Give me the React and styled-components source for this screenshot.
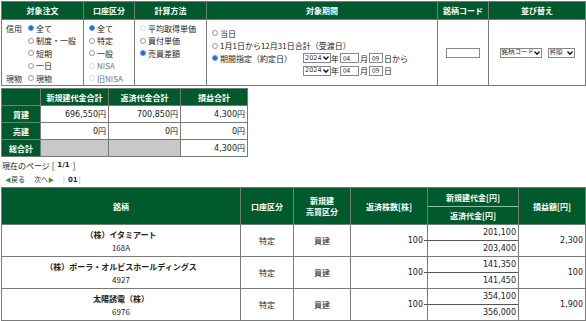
import React from 'react';
import styled, { createGlobalStyle } from 'styled-components';

const GREEN = '#005a2c';
const LINE = '#7a7a7a';

const GlobalStyle = createGlobalStyle`
  body {
    margin: 0;
    padding: 1px;
    background: #fff;
    color: #222;
    font-family: "DejaVu Sans", "Noto Sans CJK JP", sans-serif;
    font-size: 8px;
    line-height: 11px;
  }
`;

const Table = styled.table`
  border-collapse: collapse;
  table-layout: fixed;
  width: ${p => p.$w}px;
  border: 1px solid #555;
  td, th {
    border: 1px solid ${LINE};
    padding: 0;
    box-sizing: border-box;
  }
`;

const Th = styled.th`
  background: ${GREEN};
  color: #fff;
  font-weight: bold;
  font-family: "Noto Sans CJK JP", sans-serif;
  font-size: 8px;
  height: ${p => p.$h || 17}px;
  text-align: center;
  line-height: 11px;
`;

const Cell = styled.td`
  vertical-align: ${p => p.$valign || 'top'};
  text-align: ${p => p.$align || 'left'};
  padding: ${p => p.$pad || '0'} !important;
  background: ${p => (p.$gray ? '#c8c8c8' : '#fff')};
  height: ${p => p.$h || 17}px;
`;

const Label = styled.td`
  background: ${GREEN};
  color: #fff;
  font-weight: bold;
  font-family: "Noto Sans CJK JP", sans-serif;
  text-align: center;
`;

const Line = styled.div`
  display: flex;
  align-items: center;
  height: 12.5px;
  white-space: nowrap;
  color: #222;
  font-family: "Noto Sans CJK JP", sans-serif;
`;

const Side = styled.span`
  display: inline-flex;
  align-items: center;
  width: ${p => p.$w}px;
`;

const Dot = styled.span`
  display: inline-block;
  flex: none;
  width: 6px;
  height: 6px;
  border-radius: 50%;
  margin-right: 2px;
  box-sizing: border-box;
  border: 1px solid ${p => (p.$off ? '#ddd' : '#9a9a9a')};
  background: ${p =>
    p.$on ? 'radial-gradient(circle, #1a6fe0 55%, #7fb0f0 100%)' : '#fff'};
  ${p => p.$on && 'border-color: #5d95e6;'}
`;

const Muted = styled.span`
  color: #777;
`;

const Radio = ({ on, off, muted, children }) => (
  <>
    <Dot $on={on} $off={off} />
    {muted ? <Muted>{children}</Muted> : <span>{children}</span>}
  </>
);

const Period = styled.div`
  padding-left: 5px;
  padding-top: 7px;
`;

const DateRow = styled.div`
  display: flex;
  align-items: center;
  height: 12.5px;
  white-space: nowrap;
  font-family: "Noto Sans CJK JP", sans-serif;
`;

const Sel = styled.span`
  display: inline-flex;
  align-items: center;
  justify-content: space-between;
  box-sizing: border-box;
  height: 10px;
  width: ${p => p.$w}px;
  border: 1px solid #888;
  background: #fff;
  padding: 0 1px;
  font-size: 6.5px;
  color: #333;
  white-space: nowrap;
  overflow: hidden;
  font-family: "DejaVu Sans", "Noto Sans CJK JP", sans-serif;
`;

const Box = styled.span`
  display: inline-flex;
  align-items: center;
  box-sizing: border-box;
  height: 10px;
  width: ${p => p.$w}px;
  border: 1px solid #888;
  background: #fff;
  padding-left: 2px;
  font-size: 6.5px;
  margin: 0 1px;
`;

const Caret = () => (
  <svg width="6" height="4" viewBox="0 0 6 4" style={{ flex: 'none' }}>
    <path d="M0.5 0.5 L3 3.3 L5.5 0.5" stroke="#111" strokeWidth="1.3" fill="none" />
  </svg>
);

const Select = ({ w, children }) => (
  <Sel $w={w}>
    <span>{children}</span>
    <Caret />
  </Sel>
);

const Centered = styled.div`
  display: flex;
  align-items: center;
  justify-content: center;
  gap: 6px;
`;

const Gap = styled.div`
  height: 2px;
`;

const Money = styled(Cell)`
  padding-right: ${p => p.$pr || 2}px !important;
  font-family: "DejaVu Sans", "Noto Sans CJK JP", sans-serif;
`;

const PageInfo = styled.div`
  margin-top: 2px;
  height: 13px;
  display: flex;
  align-items: center;
  padding-left: 1px;
  font-family: "Noto Sans CJK JP", sans-serif;
  b { font-family: "DejaVu Sans", sans-serif; font-size: 7px; margin: 0 3px; }
`;

const Pager = styled.div`
  height: 15px;
  display: flex;
  align-items: center;
  padding-left: 4px;
  font-size: 7px;
  font-family: "Noto Sans CJK JP", sans-serif;
  color: #333;
  gap: 9px;
`;

const Arrow = styled.span`
  color: #2e9a2e;
  font-size: 6px;
`;

const PageNo = styled.span`
  color: #c08a20;
  b { color: #1b2a6b; font-family: "DejaVu Sans", sans-serif; margin: 0 1px 0 3px; }
`;

const Stock = styled.div`
  font-family: "Noto Sans CJK JP", sans-serif;
  text-align: center;
  line-height: 13px;
  strong { font-weight: bold; display: block; }
`;

const Split = styled.div`
  height: ${p => p.$h}px;
  box-sizing: border-box;
  display: flex;
  align-items: center;
  justify-content: ${p => (p.$head ? 'center' : 'flex-end')};
  padding-right: ${p => (p.$head ? 0 : 2)}px;
  position: relative;
  ${p => p.$second && `border-top: 1px solid ${p.$head ? '#9fb8a8' : '#555'};`}
  ${p =>
    p.$second && !p.$head &&
    `&::before { content: ''; position: absolute; left: -4px; top: -1px; width: 4px; border-top: 1px solid #555; }`}
`;

const rows = [
  { name: '（株）イタミアート', code: '168A', buy: '201,100', sell: '203,400', pl: '2,300' },
  { name: '（株）ポーラ・オルビスホールディングス', code: '4927', buy: '141,350', sell: '141,450', pl: '100' },
  { name: '太陽誘電（株）', code: '6976', buy: '354,100', sell: '356,000', pl: '1,900' },
];

export default function App() {
  return (
    <>
      <GlobalStyle />
      <Table $w={584}>
        <colgroup>
          <col style={{ width: 82 }} />
          <col style={{ width: 51 }} />
          <col style={{ width: 72 }} />
          <col style={{ width: 231 }} />
          <col style={{ width: 51 }} />
          <col style={{ width: 97 }} />
        </colgroup>
        <thead>
          <tr>
            <Th $h={18}>対象注文</Th>
            <Th>口座区分</Th>
            <Th>計算方法</Th>
            <Th>対象期間</Th>
            <Th>銘柄コード</Th>
            <Th>並び替え</Th>
          </tr>
        </thead>
        <tbody>
          <tr>
            <Cell $h={66} $pad="2px 0 0 4px">
              <Line><Side $w={22}>信用</Side><Radio on>全て</Radio></Line>
              <Line><Side $w={22} /><Radio>制度・一般</Radio></Line>
              <Line><Side $w={22} /><Radio>短期</Radio></Line>
              <Line><Side $w={22} /><Radio>一日</Radio></Line>
              <Line><Side $w={22}>現物</Side><Radio>現物</Radio></Line>
            </Cell>
            <Cell $pad="2px 0 0 5px">
              <Line><Radio on>全て</Radio></Line>
              <Line><Radio>特定</Radio></Line>
              <Line><Radio>一般</Radio></Line>
              <Line><Radio off muted>NISA</Radio></Line>
              <Line><Radio off muted>旧NISA</Radio></Line>
            </Cell>
            <Cell $pad="2px 0 0 5px">
              <Line><Radio off>平均取得単価</Radio></Line>
              <Line><Radio>買付単価</Radio></Line>
              <Line><Radio on>売買差額</Radio></Line>
            </Cell>
            <Cell>
              <Period>
                <Line><Radio>当日</Radio></Line>
                <Line><Radio>1月1日から12月31日合計（受渡日）</Radio></Line>
                <DateRow>
                  <Side $w={91}><Radio on>期間指定（約定日）</Radio></Side>
                  <Select w={28}>2024</Select>年<Box $w={19}>04</Box>月<Box $w={14}>09</Box>日から
                </DateRow>
                <DateRow>
                  <Side $w={91} />
                  <Select w={28}>2024</Select>年<Box $w={19}>04</Box>月<Box $w={14}>09</Box>日
                </DateRow>
              </Period>
            </Cell>
            <Cell $valign="middle" $align="center">
              <Centered><Box $w={34} /></Centered>
            </Cell>
            <Cell $valign="middle">
              <Centered>
                <Select w={42}>銘柄コード</Select>
                <Select w={27}>昇順</Select>
              </Centered>
            </Cell>
          </tr>
        </tbody>
      </Table>

      <Gap />

      <Table $w={246}>
        <colgroup>
          <col style={{ width: 39 }} />
          <col style={{ width: 68 }} />
          <col style={{ width: 72 }} />
          <col style={{ width: 67 }} />
        </colgroup>
        <thead>
          <tr>
            <Th $h={17} />
            <Th>新規建代金合計</Th>
            <Th>返済代金合計</Th>
            <Th>損益合計</Th>
          </tr>
        </thead>
        <tbody>
          <tr>
            <Label>買建</Label>
            <Money $align="right" $valign="middle">696,550円</Money>
            <Money $align="right" $valign="middle">700,850円</Money>
            <Money $align="right" $valign="middle">4,300円</Money>
          </tr>
          <tr>
            <Label>売建</Label>
            <Money $align="right" $valign="middle">0円</Money>
            <Money $align="right" $valign="middle">0円</Money>
            <Money $align="right" $valign="middle">0円</Money>
          </tr>
          <tr>
            <Label>総合計</Label>
            <Cell $gray />
            <Cell $gray />
            <Money $align="right" $valign="middle">4,300円</Money>
          </tr>
        </tbody>
      </Table>

      <PageInfo>現在のページ [<b>1/1</b>]</PageInfo>
      <Pager>
        <span><Arrow>◀</Arrow>戻る</span>
        <span>次へ<Arrow>▶</Arrow></span>
        <PageNo>|<b>01</b>|</PageNo>
      </Pager>

      <Table $w={584}>
        <colgroup>
          <col style={{ width: 239 }} />
          <col style={{ width: 53 }} />
          <col style={{ width: 57 }} />
          <col style={{ width: 77 }} />
          <col style={{ width: 91 }} />
          <col style={{ width: 67 }} />
        </colgroup>
        <thead>
          <tr>
            <Th $h={37}>銘柄</Th>
            <Th>口座区分</Th>
            <Th>新規建<br />売買区分</Th>
            <Th>返済株数[株]</Th>
            <Th>
              <Split $h={18} $head>新規建代金[円]</Split>
              <Split $h={18} $head $second>返済代金[円]</Split>
            </Th>
            <Th>損益額[円]</Th>
          </tr>
        </thead>
        <tbody>
          {rows.map(r => (
            <tr key={r.code}>
              <Cell $valign="middle" $h={32}>
                <Stock>
                  <strong>{r.name}</strong>
                  {r.code}
                </Stock>
              </Cell>
              <Cell $valign="middle" $align="center">
                <Stock>特定</Stock>
              </Cell>
              <Cell $valign="middle" $align="center">
                <Stock>買建</Stock>
              </Cell>
              <Money $valign="middle" $align="right" $pr={4}>100</Money>
              <Cell>
                <Split $h={15}>{r.buy}</Split>
                <Split $h={16} $second>{r.sell}</Split>
              </Cell>
              <Money $valign="middle" $align="right">{r.pl}</Money>
            </tr>
          ))}
        </tbody>
      </Table>
    </>
  );
}
